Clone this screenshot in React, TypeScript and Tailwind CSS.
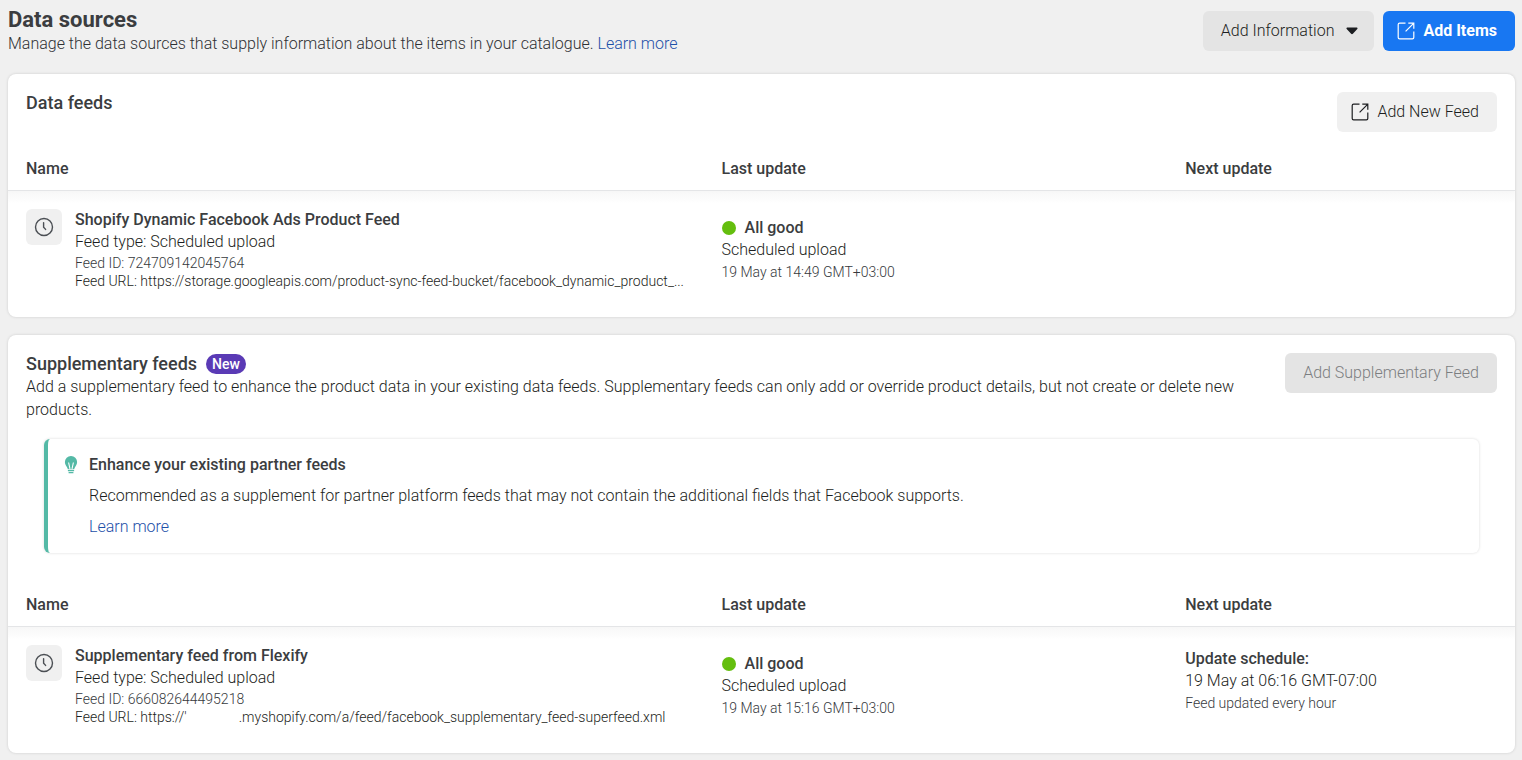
import type { ReactNode } from "react";

interface Feed {
  name: string;
  feedId: string;
  url: ReactNode;
  lastUpdate: string;
  nextUpdate?: string;
  interval?: string;
}

const dataFeeds: Feed[] = [
  {
    name: "Shopify Dynamic Facebook Ads Product Feed",
    feedId: "724709142045764",
    url: "https://storage.googleapis.com/product-sync-feed-bucket/facebook_dynamic_product_...",
    lastUpdate: "19 May at 14:49 GMT+03:00",
  },
];

const supplementaryFeeds: Feed[] = [
  {
    name: "Supplementary feed from Flexify",
    feedId: "666082644495218",
    // store name is blanked out
    url: (
      <>
        https://'<span className="inline-block w-13" />
        .myshopify.com/a/feed/facebook_supplementary_feed-superfeed.xml
      </>
    ),
    lastUpdate: "19 May at 15:16 GMT+03:00",
    nextUpdate: "19 May at 06:16 GMT-07:00",
    interval: "Feed updated every hour",
  },
];

function ExternalIcon() {
  return (
    <svg width="18" height="18" viewBox="0 0 18 18" fill="none" stroke="currentColor" strokeWidth="1.2" aria-hidden="true">
      <path d="M8.5 1.2H2.6A1.4 1.4 0 0 0 1.2 2.6v12.8a1.4 1.4 0 0 0 1.4 1.4h12.8a1.4 1.4 0 0 0 1.4-1.4V9.5" />
      <path d="M8.6 9.4 16.6 1.4M11.3 1.2h5.5v5.5" />
    </svg>
  );
}

function ClockIcon() {
  return (
    <svg width="20" height="20" viewBox="0 0 20 20" fill="none" stroke="#4b4f54" strokeWidth="1.4" strokeLinecap="round" aria-hidden="true">
      <circle cx="10" cy="10" r="8.5" />
      <path d="M9.6 5.6v4.6l2 2.2" />
    </svg>
  );
}

function BulbIcon() {
  return (
    <svg width="14" height="20" viewBox="0 0 14 20" aria-hidden="true">
      <path
        d="M7 1a6 6 0 0 0-6.1 6c0 2.2 1.1 3.6 2 4.9.5.8.8 1.5.9 2.3h6.4c.1-.8.4-1.5.9-2.3.9-1.3 2-2.7 2-4.9A6 6 0 0 0 7 1Z"
        fill="#54b9a6"
      />
      <path d="M4.6 7.5 6 13.8M9.4 7.5 8 13.8" fill="none" stroke="#fff" strokeWidth="1.1" />
      <path d="M3.9 15.6h6.2M4.6 17.7h4.8" stroke="#54b9a6" strokeWidth="1.3" />
    </svg>
  );
}

function FeedTable({ feeds }: { feeds: Feed[] }) {
  return (
    <table className="w-full table-fixed text-left">
      <thead>
        <tr className="border-b border-[#e4e5e7]">
          <th className="w-6/13 px-[18px] pt-2 pb-2.5 font-medium">Name</th>
          <th className="w-4/13 px-[18px] pt-2 pb-2.5 font-medium">Last update</th>
          <th className="w-3/13 px-[18px] pt-2 pb-2.5 font-medium">Next update</th>
        </tr>
      </thead>
      <tbody className="bg-linear-to-b from-[#f7f7f7] to-transparent to-10%">
        {feeds.map((feed) => (
          <tr key={feed.feedId}>
            <td className="px-[18px] pt-[18px] pb-[27px]">
              <div className="flex gap-[13px]">
                <div className="flex h-9 w-9 shrink-0 items-center justify-center rounded-md bg-[#f0f0f0]">
                  <ClockIcon />
                </div>
                <div className="min-w-0">
                  <div className="font-medium">{feed.name}</div>
                  <div className="text-[#1c1e21]">Feed type: Scheduled upload</div>
                  <div className="pt-px text-sm leading-[18px] text-[#36393d]">Feed ID: {feed.feedId}</div>
                  <div className="text-sm leading-[18px] whitespace-nowrap text-[#1c1e21]">Feed URL: {feed.url}</div>
                </div>
              </div>
            </td>
            <td className="px-[18px] pt-[18px] pb-[27px]">
              <div className="flex items-center gap-[9px] font-medium">
                <span className="h-3.5 w-3.5 rounded-full bg-[#64be0e]" />
                All good
              </div>
              <div className="text-[#1c1e21]">Scheduled upload</div>
              <div className="text-sm leading-[22px] text-[#36393d]">{feed.lastUpdate}</div>
            </td>
            <td className="px-[18px] pt-[18px] pb-9">
              {feed.nextUpdate && (
                <>
                  <div className="font-medium">Update schedule:</div>
                  <div className="text-[#1c1e21]">{feed.nextUpdate}</div>
                  <div className="text-sm leading-[22px] text-[#36393d]">{feed.interval}</div>
                </>
              )}
            </td>
          </tr>
        ))}
      </tbody>
    </table>
  );
}

export default function App() {
  return (
    <div className="min-h-screen bg-[#f0f0f0] pt-[11px] pr-[7px] pb-[7px] pl-2 font-[Roboto,sans-serif] text-base leading-[22px] font-light text-[#3b3d40]">
      {/* Page header */}
      <header className="flex items-start justify-between">
        <div>
          <h1 className="text-[22px] leading-[18px] font-bold">Data sources</h1>
          <p className="pt-1 text-[#2f3134]">
            Manage the data sources that supply information about the items in your catalogue.{" "}
            <a href="#" className="text-[#1d4fa8]">Learn more</a>
          </p>
        </div>
        <div className="flex gap-[9px]">
          <button className="flex h-10 items-center gap-3 rounded-md bg-[#e4e4e4] pr-4 pl-[18px] text-[#1c1e21]">
            Add Information
            <svg width="12" height="8" viewBox="0 0 12 8" fill="#1c1e21" aria-hidden="true">
              <path d="M1.2.6h9.6c.7 0 1 .8.5 1.3L6.9 6.8c-.5.5-1.3.5-1.8 0L.7 1.9C.2 1.4.5.6 1.2.6Z" />
            </svg>
          </button>
          <button className="flex h-10 items-center gap-2 rounded-md bg-[#1877f2] pr-[18px] pl-3.5 font-bold text-white">
            <ExternalIcon />
            Add Items
          </button>
        </div>
      </header>

      {/* Data feeds */}
      <section className="mt-[19px] rounded-lg bg-white shadow-[0_0_3px_rgba(0,0,0,0.15)]">
        <div className="flex items-start justify-between p-[18px]">
          <h2 className="text-lg leading-[22px] font-medium">Data feeds</h2>
          <button className="flex h-10 items-center gap-2 rounded-md bg-[#f0f0f0] pr-[18px] pl-3.5 text-[#1c1e21]">
            <ExternalIcon />
            Add New Feed
          </button>
        </div>
        <FeedTable feeds={dataFeeds} />
      </section>

      {/* Supplementary feeds */}
      <section className="mt-[18px] rounded-lg bg-white shadow-[0_0_3px_rgba(0,0,0,0.15)]">
        <div className="flex items-start justify-between gap-9 p-[18px]">
          <div>
            <div className="flex items-center gap-[9px]">
              <h2 className="text-lg leading-[22px] font-medium">Supplementary feeds</h2>
              <span className="rounded-full bg-[#5a3ab5] px-1.5 text-sm leading-5 font-medium text-white">New</span>
            </div>
            <p className="leading-[23px] text-[#1c1e21]">
              Add a supplementary feed to enhance the product data in your existing data feeds. Supplementary feeds can
              only add or override product details, but not create or delete new products.
            </p>
          </div>
          <button disabled className="h-10 shrink-0 rounded-md bg-[#e4e4e4] px-[18px] text-[#7c7e81]">
            Add Supplementary Feed
          </button>
        </div>

        <div className="mx-9 flex gap-[11px] rounded-md border-l-4 border-[#54b9a6] px-4 py-[15px] shadow-[0_0_3px_rgba(0,0,0,0.15)]">
          <div className="pt-px">
            <BulbIcon />
          </div>
          <div className="flex flex-col items-start gap-[9px]">
            <h3 className="font-medium">Enhance your existing partner feeds</h3>
            <p className="text-[#1c1e21]">
              Recommended as a supplement for partner platform feeds that may not contain the additional fields that
              Facebook supports.
            </p>
            <a href="#" className="text-[#1d4fa8]">Learn more</a>
          </div>
        </div>

        <div className="pt-[33px]">
          <FeedTable feeds={supplementaryFeeds} />
        </div>
      </section>
    </div>
  );
}
